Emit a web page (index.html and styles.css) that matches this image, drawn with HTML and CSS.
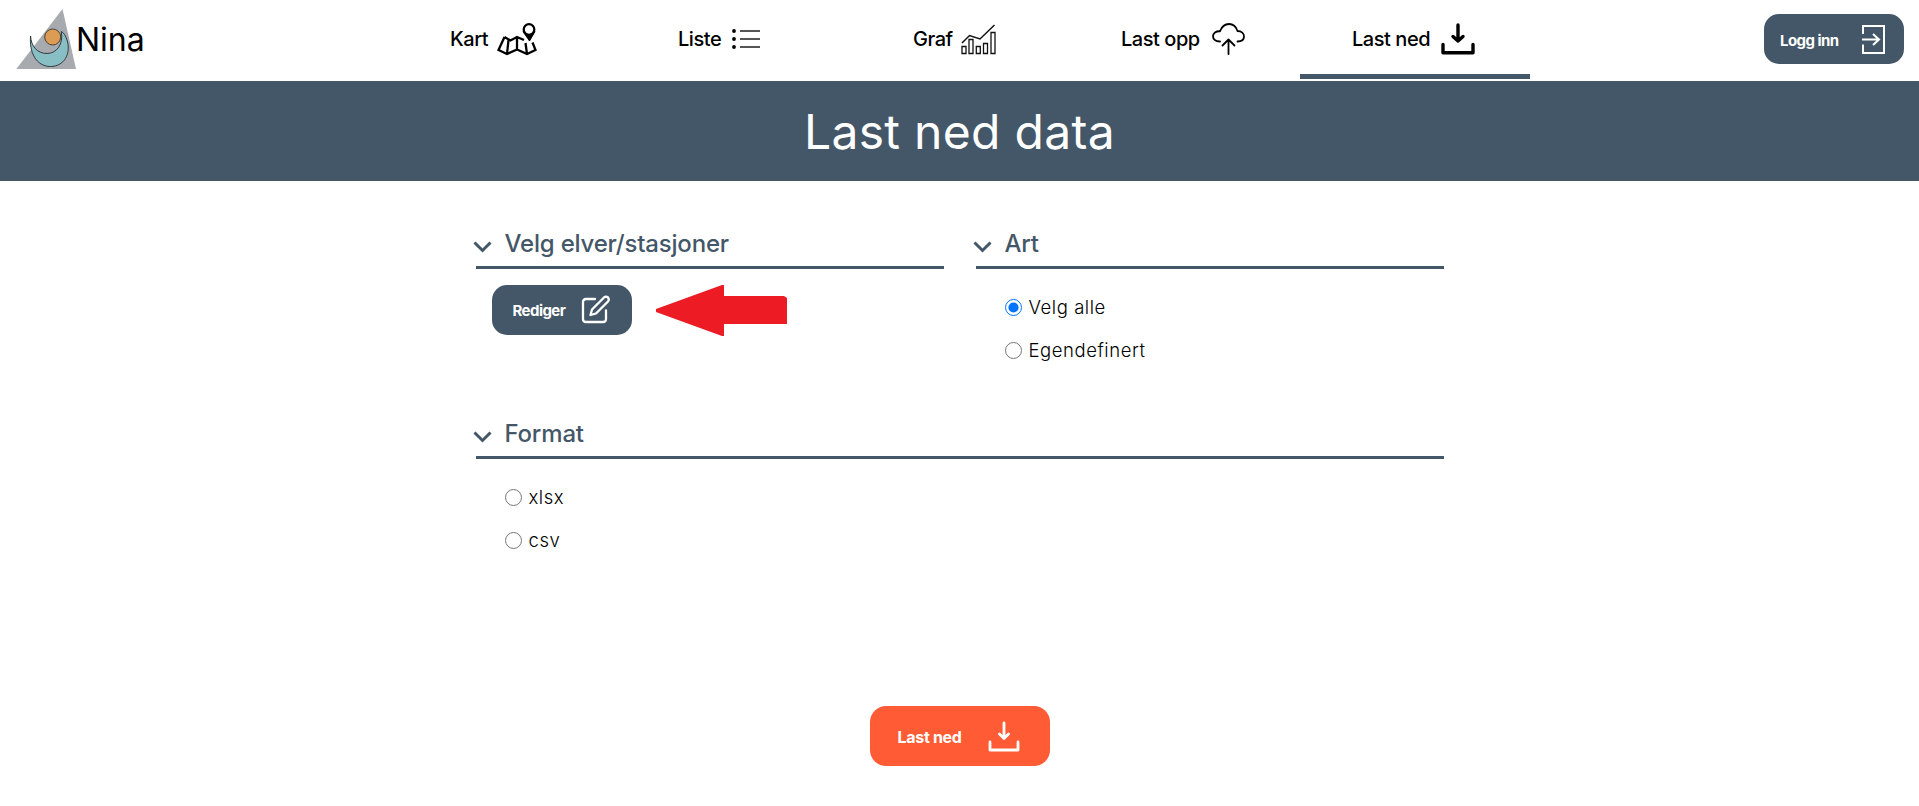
FILE: index.html
```html
<!DOCTYPE html>
<html lang="no">
<head>
<meta charset="utf-8">
<title>Last ned data</title>
<link rel="stylesheet" href="styles.css">
</head>
<body>
<header class="topbar">
  <a class="brand">
    <svg class="logo" width="62" height="62" viewBox="0 0 62 62">
      <path d="M46.500 1L60 61H.3z" fill="#a7abb0"/>
      <path d="M14.600 28C13 44 20 58.500 34.500 58.500C48 58.500 55 46 51.300 33Q49 25 45.300 23.500C47.500 36 41 45.500 31 45.500C21 45.500 15 38 14.600 28z" fill="#87bfc4" stroke="#333b40"/>
      <circle cx="36.700" cy="29" r="8" fill="#dd9c53" stroke="#4a4038"/>
    </svg>
    <span class="brand-name">Nina</span>
  </a>
  <nav class="tabs">
    <a class="tab tab-kart"><span class="label">Kart</span>
      <svg width="40" height="34" viewBox="0 0 40 34" fill="none" stroke="#000" stroke-width="2.300">
        <path d="M7.500 15L1.500 28L10 32L20 27.500L30 32L38.500 28L35.500 20.500M7.500 15L13.500 18.500L20 15L27 18M11.500 18L10 32M20 15V27.500M28.500 21L30 32"/>
        <circle cx="32" cy="7.500" r="5.300"/><path d="M26 9.500Q32 15.500 38 9.500L32.500 19z" fill="#000" stroke-width="1"/>
      </svg></a>
    <a class="tab tab-liste"><span class="label">Liste</span>
      <svg width="28" height="20" viewBox="0 0 28 20"><path d="M8 2H28M8 10H28M8 18H28" stroke="#555" stroke-width="2"/><circle cx="2" cy="2" r="1.900"/><circle cx="2" cy="10" r="1.900"/><circle cx="2" cy="18" r="1.900"/></svg></a>
    <a class="tab tab-graf"><span class="label">Graf</span>
      <svg width="35" height="31" viewBox="0 0 35 31" fill="none" stroke="#111" stroke-width="1.300"><path d="M1 19L8.500 11.500L19 15L33.500 1" stroke-width="1.500"/><path d="M1 22.500h4v7H1zM8 15.500h4v14H8zM15.300 22.500h4v7h-4zM22.500 19.500h4v10h-4zM30 8.500h4v21h-4z"/></svg></a>
    <a class="tab tab-opp"><span class="label">Last opp</span>
      <svg width="33" height="32" viewBox="0 0 33 32" fill="none" stroke="#000" stroke-width="1.800" stroke-linecap="round" stroke-linejoin="round"><path d="M8 18.500C3 18.500 1 16 1 13C1 10 4 8 8 8.300C10 3 13 1 17 1C21 1 24 3.500 25.500 8C29.500 8 32 10.500 32 13.500C32 16.500 29.500 18.500 25.500 18.500M16.500 31V16.500M10.500 22.500L16.500 16.500L22.500 22.500"/></svg></a>
    <a class="tab tab-ned active"><span class="label">Last ned</span>
      <svg width="34" height="32" viewBox="0 0 34 32" fill="none" stroke="#000" stroke-width="3.400" stroke-linecap="round" stroke-linejoin="round"><path d="M2 21.500V29.800H32V21.500M17 2V18M12 13.500L17 18L22 13.500"/></svg></a>
  </nav>
  <button class="btn login"><span>Logg inn</span>
    <svg width="25" height="31" viewBox="0 0 25 31" fill="none" stroke="#fff" stroke-width="2"><path d="M2 10V2H23V29H2V20.500M1 15.500H18M12 10L18 15.500L12 21"/></svg></button>
</header>
<h1 class="banner">Last ned data</h1>
<main class="content">
  <div class="columns">
    <section class="rivers">
      <h2 class="heading"><svg width="20" height="14" viewBox="0 0 20 14"><path d="M1.500 2.500L9.500 10.500L17.500 2.500" fill="none" stroke="#445768" stroke-width="3"/></svg><span>Velg elver/stasjoner</span></h2>
      <div class="edit-row">
        <button class="btn edit"><span>Rediger</span>
          <svg width="30" height="30" viewBox="0 0 30 30" fill="none" stroke="#fff" stroke-width="2.300" stroke-linejoin="round" stroke-linecap="round"><path d="M14 4H5Q2 4 2 7V24Q2 27 5 27H22Q25 27 25 24V15.500"/><path d="M9.500 20L11 14.500L23 2.500Q25 .8 27 2.500Q28.500 4.500 27 6.500L15 18.500z"/></svg></button>
        <svg class="arrow" width="131" height="51" viewBox="0 0 131 51"><path d="M0 24L66 0H68V11H128L131 13V39H68V51H66L0 27z" fill="#ed1c24"/></svg>
      </div>
    </section>
    <section>
      <h2 class="heading"><svg width="20" height="14" viewBox="0 0 20 14"><path d="M1.500 2.500L9.500 10.500L17.500 2.500" fill="none" stroke="#445768" stroke-width="3"/></svg><span>Art</span></h2>
      <div class="options">
        <label class="option"><input type="radio" name="art" checked><span>Velg alle</span></label>
        <label class="option"><input type="radio" name="art"><span>Egendefinert</span></label>
      </div>
    </section>
  </div>
  <section class="format">
    <h2 class="heading"><svg width="20" height="14" viewBox="0 0 20 14"><path d="M1.500 2.500L9.500 10.500L17.500 2.500" fill="none" stroke="#445768" stroke-width="3"/></svg><span>Format</span></h2>
    <div class="options">
      <label class="option"><input type="radio" name="format"><span>xlsx</span></label>
      <label class="option"><input type="radio" name="format"><span>csv</span></label>
    </div>
  </section>
  <button class="btn download"><span>Last ned</span>
    <svg width="32" height="31" viewBox="0 0 32 31" fill="none" stroke="#fff" stroke-width="2.800" stroke-linecap="round" stroke-linejoin="round"><path d="M2 21V29H30V21M16 2V17.500M11.500 13L16 17.500L20.500 13"/></svg></button>
</main>
</body>
</html>
```
FILE: styles.css
```css
* { box-sizing: border-box; }
body { margin: 0; background: #fff; color: #000; font-family: Inter, "Liberation Sans", sans-serif; }
svg { display: block; flex: none; }
.topbar { display: flex; height: 81px; }
.brand { display: flex; width: 380px; padding: 8px 0 0 16px; }
.brand-name { font-size: 32px; line-height: 64px; margin-left: -2px; }
.tabs { display: flex; }
.tab { display: flex; align-items: center; width: 230px; height: 79px; border-bottom: 5px solid transparent; font-size: 20px; font-weight: 500; letter-spacing: -.45px; padding-top: 4px; white-space: nowrap; }
.tab.active { border-bottom-color: #445768; }
.label { line-height: 24px; }
.tab-kart { padding-left: 70px; }
.tab-kart .label { width: 47px; }
.tab-liste { padding-left: 68px; }
.tab-liste .label { width: 54px; }
.tab-graf { padding-left: 73px; }
.tab-graf .label { width: 48px; }
.tab-opp { padding-left: 51px; }
.tab-opp .label { width: 91px; }
.tab-ned { padding-left: 52px; }
.tab-ned .label { width: 89px; }
.btn { display: flex; align-items: center; width: 140px; height: 50px; padding: 0; border: 0; border-radius: 15px; background: #445768; color: #fff; font-family: inherit; font-size: 15px; font-weight: 700; letter-spacing: -.55px; white-space: nowrap; }
.btn span { text-align: left; }
.login { margin: 14px 0 0 234px; padding: 0 0 0 16px; }
.login span { width: 81px; padding-top: 2px; }
.banner { display: flex; align-items: center; justify-content: center; height: 100px; margin: 0; background: #445768; color: #fff; font-size: 48px; font-weight: 400; letter-spacing: .3px; }
.content { width: 968px; margin: 0 auto; padding-top: 44px; }
.columns { display: grid; grid-template-columns: 468px 468px; gap: 32px; height: 190px; }
.heading { display: flex; align-items: center; height: 44px; margin: 0; padding-bottom: 5px; border-bottom: 3px solid #445768; color: #445768; font-size: 24px; font-weight: 500; letter-spacing: -.2px; }
.heading svg { margin: 7px 12px 0 -3px; }
.edit-row { display: flex; gap: 24px; padding: 16px 0 0 16px; }
.edit { padding-left: 21px; }
.edit span { width: 68px; padding-top: 1px; }
.options { padding: 26px 0 0 29px; }
.option { display: flex; align-items: center; height: 24px; margin-bottom: 19px; font-size: 18.5px; font-weight: 300; letter-spacing: .55px; }
.option input { width: 17px; height: 17px; margin: 0 7px 0 0; }
.download { width: 180px; height: 60px; margin: 154px auto 0; padding-left: 28px; border-radius: 16px; background: #ff5c36; font-size: 16px; letter-spacing: -.3px; }
.download span { width: 90px; padding-top: 1px; }
```
